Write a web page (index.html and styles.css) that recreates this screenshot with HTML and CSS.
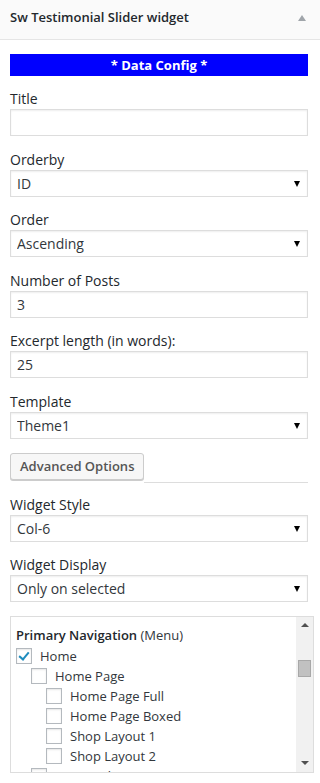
FILE: index.html
```html
<!DOCTYPE html>
<html lang="en">
<head>
    <meta charset="UTF-8">
    <meta name="viewport" content="width=device-width, initial-scale=1.0">
    <title>Sw Testimonial Slider widget</title>
    <link rel="stylesheet" href="styles.css">
</head>
<body>
    <div class="widget">
        <div class="widget-top">
            <h3>Sw Testimonial Slider widget</h3>
            <span class="toggle-arrow"></span>
        </div>
        <div class="widget-inside">
            <div class="section-title">* Data Config *</div>

            <p class="field">
                <label for="title">Title</label>
                <input type="text" id="title" value="">
            </p>
            <p class="field">
                <label for="orderby">Orderby</label>
                <span class="select-wrap">
                    <select id="orderby"><option>ID</option></select>
                </span>
            </p>
            <p class="field">
                <label for="order">Order</label>
                <span class="select-wrap">
                    <select id="order"><option>Ascending</option></select>
                </span>
            </p>
            <p class="field">
                <label for="numberposts">Number of Posts</label>
                <input type="text" id="numberposts" value="3">
            </p>
            <p class="field">
                <label for="length">Excerpt length (in words):</label>
                <input type="text" id="length" value="25">
            </p>
            <p class="field">
                <label for="layout">Template</label>
                <span class="select-wrap">
                    <select id="layout"><option>Theme1</option></select>
                </span>
            </p>

            <div class="advanced-row">
                <button class="button">Advanced Options</button>
                <span class="advanced-line"></span>
            </div>

            <p class="field">
                <label for="widget-style">Widget Style</label>
                <span class="select-wrap">
                    <select id="widget-style"><option>Col-6</option></select>
                </span>
            </p>
            <p class="field">
                <label for="widget-display">Widget Display</label>
                <span class="select-wrap">
                    <select id="widget-display"><option>Only on selected</option></select>
                </span>
            </p>

            <div class="menu-box">
                <div class="menu-list">
                    <div class="menu-name"><strong>Primary Navigation</strong> (Menu)</div>
                    <label class="menu-item"><span class="check checked"></span>Home</label>
                    <label class="menu-item level-1"><span class="check"></span>Home Page</label>
                    <label class="menu-item level-2"><span class="check"></span>Home Page Full</label>
                    <label class="menu-item level-2"><span class="check"></span>Home Page Boxed</label>
                    <label class="menu-item level-2"><span class="check"></span>Shop Layout 1</label>
                    <label class="menu-item level-2"><span class="check"></span>Shop Layout 2</label>
                    <label class="menu-item level-1"><span class="check"></span>Menu Sale</label>
                </div>
                <div class="scrollbar">
                    <span class="scroll-up"></span>
                    <span class="scroll-track"><span class="scroll-thumb"></span></span>
                    <span class="scroll-down"></span>
                </div>
            </div>
        </div>
    </div>
</body>
</html>
```

FILE: styles.css
```css
body {
    margin: 0;
    background: #fff;
    font-family: 'Open Sans', 'Noto Sans', sans-serif;
    font-size: 14px;
    color: #444;
}

.widget-top {
    height: 40px;
    background: #fafafa;
    border-bottom: 1px solid #e5e5e5;
    display: flex;
    align-items: center;
    justify-content: space-between;
    padding: 0 14px 0 10px;
    box-sizing: border-box;
}

.widget-top h3 {
    margin: 0;
    font-size: 13px;
    font-weight: 600;
    color: #23282d;
    line-height: 1;
    padding-bottom: 4px;
}

.toggle-arrow {
    width: 0;
    height: 0;
    border-left: 4.5px solid transparent;
    border-right: 4.5px solid transparent;
    border-bottom: 6px solid #a0a5aa;
    margin-bottom: 4px;
}

.widget-inside {
    padding: 14px 6px 0 10px;
}

.section-title {
    width: 298px;
    height: 22px;
    line-height: 22px;
    background: #0000ff;
    color: #fff;
    font-size: 13px;
    font-weight: 700;
    text-align: center;
    margin-bottom: 13px;
}

.field {
    margin: 0 0 13.6px;
    width: 298px;
}

.field label {
    display: block;
    line-height: 20px;
    color: #23282d;
}

.field input,
.field select {
    display: block;
    width: 100%;
    height: 27px;
    margin: 0;
    padding: 0 6px;
    box-sizing: border-box;
    border: 1px solid #ddd;
    box-shadow: inset 0 1px 2px rgba(0, 0, 0, 0.07);
    background: #fff;
    color: #32373c;
    font-family: inherit;
    font-size: 14px;
    border-radius: 0;
    outline: none;
}

.field select {
    -webkit-appearance: none;
    appearance: none;
}

.select-wrap {
    display: block;
    position: relative;
}

.select-wrap::after {
    content: '';
    position: absolute;
    right: 8px;
    top: 11px;
    border-left: 3.5px solid transparent;
    border-right: 3.5px solid transparent;
    border-top: 6px solid #000;
}

.advanced-row {
    display: flex;
    align-items: flex-end;
    width: 298px;
    margin: 0 0 15px;
}

.button {
    height: 27px;
    padding: 0 9px;
    background: #f7f7f7;
    border: 1px solid #ccc;
    border-radius: 3px;
    box-shadow: 0 1px 0 #ccc;
    color: #555;
    font-family: inherit;
    font-size: 13px;
    font-weight: 600;
    cursor: pointer;
}

.advanced-line {
    flex: 1;
    border-bottom: 1px solid #ddd;
    margin-bottom: -3px;
}

.menu-box {
    display: flex;
    width: 304px;
    height: 157px;
    border: 1px solid #ddd;
    box-sizing: border-box;
    overflow: hidden;
}

.menu-list {
    flex: 1;
    padding: 8px 0 0 5px;
    color: #32373c;
    font-size: 13px;
}

.menu-name {
    line-height: 20px;
    margin-bottom: 1px;
}

.menu-name strong {
    font-weight: 600;
    color: #23282d;
}

.menu-item {
    display: flex;
    align-items: center;
    height: 20px;
}

.menu-item.level-1 {
    padding-left: 15px;
}

.menu-item.level-2 {
    padding-left: 30px;
}

.check {
    width: 16px;
    height: 16px;
    box-sizing: border-box;
    border: 1px solid #b4b9be;
    background: #fff;
    box-shadow: inset 0 1px 2px rgba(0, 0, 0, 0.1);
    margin-right: 8px;
    position: relative;
}

.check.checked::after {
    content: '';
    position: absolute;
    left: 4px;
    top: 1px;
    width: 4px;
    height: 8px;
    border-right: 2.5px solid #1e8cbe;
    border-bottom: 2.5px solid #1e8cbe;
    transform: rotate(40deg);
}

.scrollbar {
    width: 17px;
    background: #f1f1f1;
    display: flex;
    flex-direction: column;
    align-items: center;
}

.scroll-up,
.scroll-down {
    height: 17px;
    display: flex;
    align-items: center;
    justify-content: center;
}

.scroll-up::before {
    content: '';
    border-left: 4px solid transparent;
    border-right: 4px solid transparent;
    border-bottom: 4px solid #505050;
}

.scroll-down::before {
    content: '';
    border-left: 4px solid transparent;
    border-right: 4px solid transparent;
    border-top: 4px solid #505050;
}

.scroll-track {
    flex: 1;
    width: 100%;
    padding-top: 26px;
    display: flex;
    justify-content: center;
}

.scroll-thumb {
    width: 13px;
    height: 17px;
    background: #c1c1c1;
    border: 1px solid #a8a8a8;
    box-sizing: border-box;
}
```
